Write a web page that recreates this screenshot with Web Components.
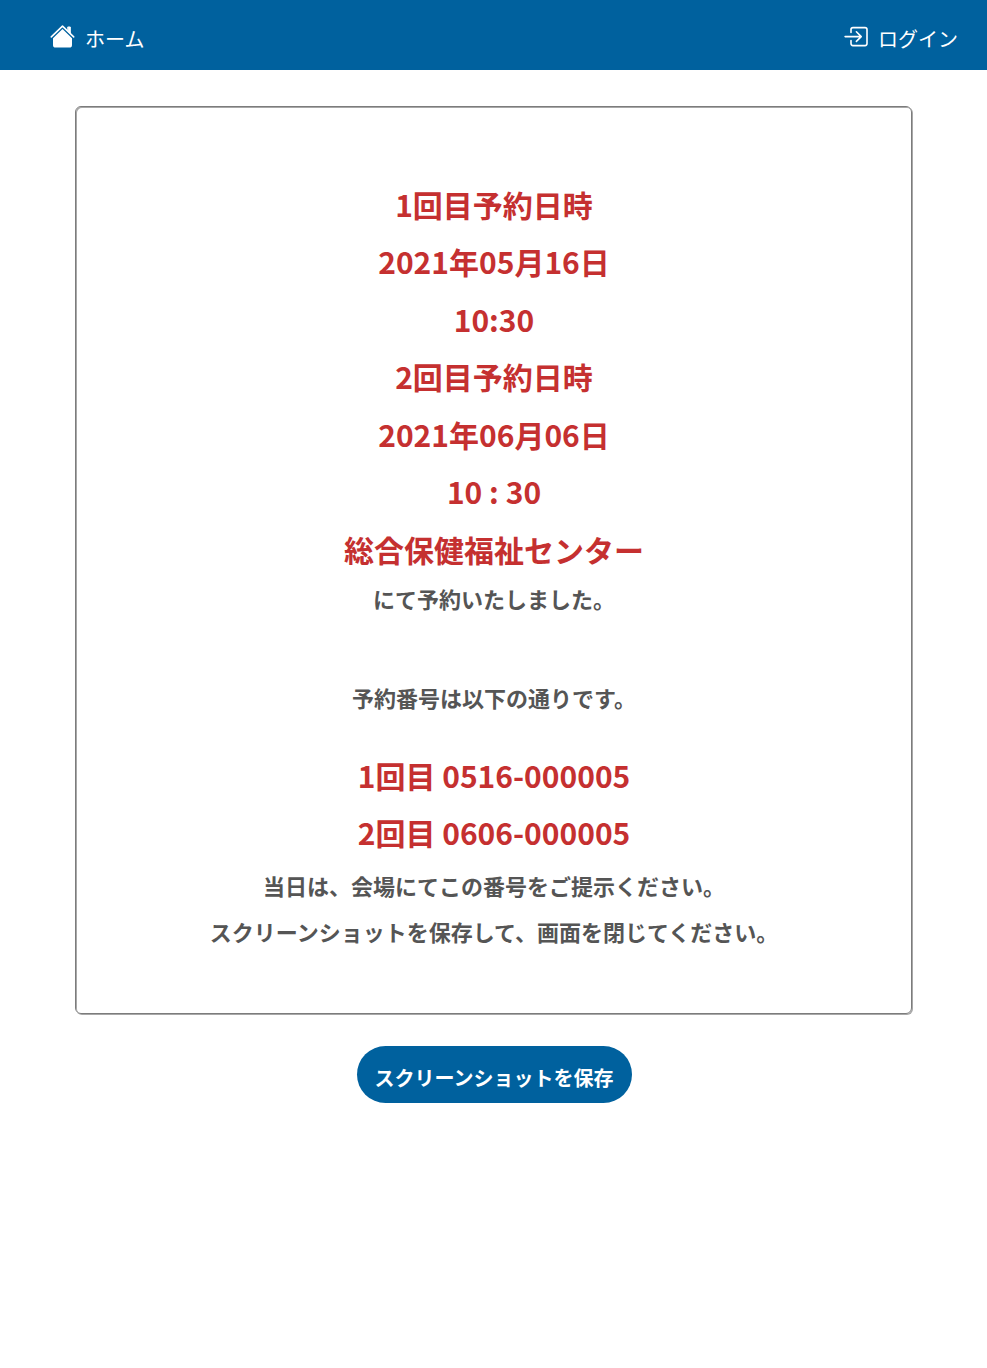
<!DOCTYPE html>
<html lang="ja">
<head>
<meta charset="utf-8">
<title>予約完了</title>
<style>
html,body{margin:0;background:#fff;font-family:"Noto Sans CJK JP",sans-serif}
</style>
</head>
<body>
<reservation-page></reservation-page>
<script>
const define = (name, html) => customElements.define(name, class extends HTMLElement {
  constructor() {
    super();
    this.attachShadow({mode: 'open'}).innerHTML = html;
  }
});

define('nav-link', `
<style>
:host{display:flex;align-items:center;color:#fff;font-size:20px;line-height:30px}
::slotted(svg){display:block;width:25px;height:25px;margin:0 10px 5px 0}
</style>
<slot name="icon"></slot><slot></slot>`);

define('nav-bar', `
<style>
:host{display:flex;justify-content:space-between;align-items:center;box-sizing:border-box;height:70px;padding:7px 29px 0 50px;background:#00619e}
</style>
<slot></slot>`);

define('red-line', `
<style>
:host{display:block;color:#c53030;font-weight:700;font-size:30px;line-height:57.5px;text-align:center}
</style>
<slot></slot>`);

define('note-line', `
<style>
:host{display:block;color:#555;font-weight:700;font-size:22px;line-height:46px;text-align:center}
</style>
<slot></slot>`);

define('result-card', `
<style>
:host{display:block;box-sizing:border-box;width:837px;height:908px;margin:36px 0 0 75px;padding:68.75px 0 0 1px;border:1px solid #7c7c7c;border-radius:6px;box-shadow:inset 1px 1px #a8a8a8,1px 1px #a8a8a8}
</style>
<slot></slot>`);

define('save-button', `
<style>
:host{display:block;width:275px;margin:32px 0 0 356.5px}
button{display:block;width:100%;height:57px;padding:7px 0 0;border:0;border-radius:29px;background:#00619e;color:#fff;font:700 20px/30px "Noto Sans CJK JP",sans-serif}
</style>
<button type="button"><slot></slot></button>`);

define('reservation-page', `
<style>
:host{display:block;min-height:1368px}
.after-place{margin-top:-3.35px}
.number-intro{margin-top:53px}
.numbers{margin:26.6px 0 .4px}
</style>
<nav-bar>
  <nav-link>
    <svg slot="icon" viewBox="0 0 25 25" fill="none" stroke="#fff" stroke-width="1.6" stroke-linecap="round" stroke-linejoin="round">
      <path d="M1.3 12.9 12.5 2.2l11.2 10.7"/>
      <path d="M18.1 3h2.2v6.6l-2.2-2.1z" fill="#fff" stroke-width="1"/>
      <path d="M12.5 5 22 14.2v6.7a2.7 2.7 0 0 1-2.7 2.7H5.7A2.7 2.7 0 0 1 3 20.9v-6.7z" fill="#fff" stroke="none"/>
    </svg>ホーム
  </nav-link>
  <nav-link>
    <svg slot="icon" viewBox="-.8 0 25 25" fill="none" stroke="#fff" stroke-width="1.6" stroke-linecap="round" stroke-linejoin="round">
      <path d="M7.2 8.4V5.6a2 2 0 0 1 2-2h12a2 2 0 0 1 2 2v14a2 2 0 0 1-2 2h-12a2 2 0 0 1-2-2v-3"/>
      <path d="M1.3 12.6h15.8M12.6 7.8l4.8 4.8-4.8 4.8"/>
    </svg>ログイン
  </nav-link>
</nav-bar>
<result-card>
  <red-line>1回目予約日時</red-line>
  <red-line>2021年05月16日</red-line>
  <red-line>10:30</red-line>
  <red-line>2回目予約日時</red-line>
  <red-line>2021年06月06日</red-line>
  <red-line>10 : 30</red-line>
  <red-line>総合保健福祉センター</red-line>
  <note-line class="after-place">にて予約いたしました。</note-line>
  <note-line class="number-intro">予約番号は以下の通りです。</note-line>
  <div class="numbers">
    <red-line>1回目 0516-000005</red-line>
    <red-line>2回目 0606-000005</red-line>
  </div>
  <note-line>当日は、会場にてこの番号をご提示ください。</note-line>
  <note-line>スクリーンショットを保存して、画面を閉じてください。</note-line>
</result-card>
<save-button>スクリーンショットを保存</save-button>`);
</script>
</body>
</html>
